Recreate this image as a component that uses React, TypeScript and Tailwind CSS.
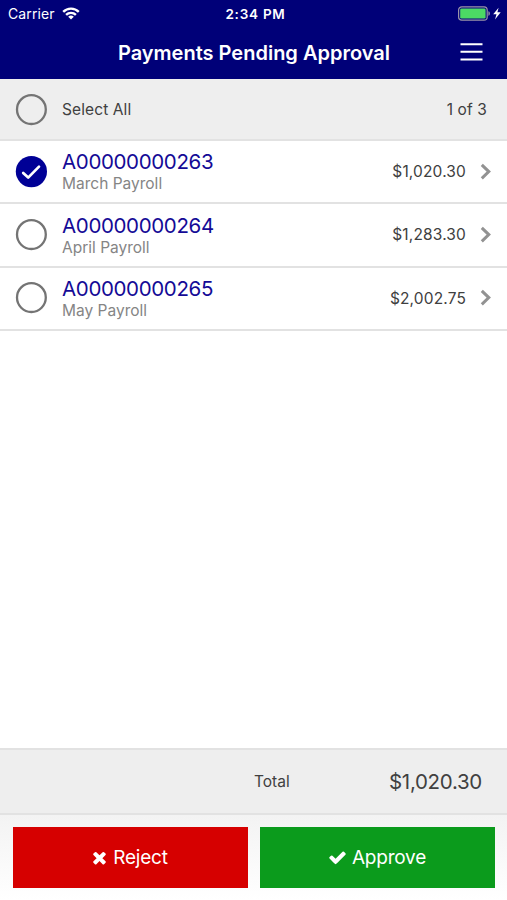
import { useState } from "react";

interface Payment {
  id: string;
  description: string;
  amount: number;
}

const payments: Payment[] = [
  { id: "A00000000263", description: "March Payroll", amount: 1020.3 },
  { id: "A00000000264", description: "April Payroll", amount: 1283.3 },
  { id: "A00000000265", description: "May Payroll", amount: 2002.75 },
];

function fmt(n: number): string {
  return new Intl.NumberFormat("en-US", {
    style: "currency",
    currency: "USD",
  }).format(n);
}

function WifiIcon() {
  return (
    <svg width="18" height="13" viewBox="0 0 18 13" fill="none" stroke="white" strokeWidth="2.4">
      <path d="M1.2 4.8a11.2 11.2 0 0 1 15.6 0" />
      <path d="M4.1 7.9a7 7 0 0 1 9.8 0" />
      <path d="M9 12.6 6.2 9.8a4 4 0 0 1 5.6 0Z" fill="white" stroke="none" />
    </svg>
  );
}

function BatteryIcon() {
  return (
    <svg width="43" height="16" viewBox="0 0 43 16" fill="none">
      <rect x="0.6" y="0.8" width="28.6" height="13.4" rx="3.2" stroke="#9a94a8" strokeWidth="1.2" />
      <rect x="2.2" y="2.4" width="25.4" height="10.2" rx="1.4" fill="#4cd964" />
      <path d="M30.4 5.2c2 .5 2 4.1 0 4.6Z" fill="#9a94a8" />
      <path d="M40.6 1.8 35.2 8.2h3.3L37 13.6l5.7-7.3h-3.3Z" fill="white" />
    </svg>
  );
}

function ChevronIcon() {
  return (
    <svg width="12" height="18" viewBox="0 0 12 18" fill="none" stroke="#929292" strokeWidth="3">
      <path d="M1.8 1.8 8.8 8.6 1.8 15.4" />
    </svg>
  );
}

function TimesIcon() {
  return (
    <svg width="19" height="19" viewBox="0 0 1792 1792" fill="white">
      <path d="M1490 1322q0 40-28 68l-136 136q-28 28-68 28t-68-28l-294-294-294 294q-28 28-68 28t-68-28l-136-136q-28-28-28-68t28-68l294-294-294-294q-28-28-28-68t28-68l136-136q28-28 68-28t68 28l294 294 294-294q28-28 68-28t68 28l136 136q28 28 28 68t-28 68l-294 294 294 294q28 28 28 68z" />
    </svg>
  );
}

function CheckIcon() {
  return (
    <svg width="19" height="19" viewBox="0 0 1792 1792" fill="white">
      <path d="M1671 566q0 40-28 68l-724 724-136 136q-28 28-68 28t-68-28l-136-136-362-362q-28-28-28-68t28-68l136-136q28-28 68-28t68 28l294 295 656-657q28-28 68-28t68 28l136 136q28 28 28 68z" />
    </svg>
  );
}

function SelectCircle({ checked, onClick }: { checked: boolean; onClick: () => void }) {
  return (
    <button onClick={onClick} className="shrink-0 cursor-pointer">
      <svg width="32" height="32" viewBox="0 0 32 32" fill="none" className="block">
        {checked ? (
          <>
            <circle cx="16.4" cy="15.6" r="15.6" fill="#000096" />
            <path d="m8.2 16.9 5 4.7L24 10.6" stroke="white" strokeWidth="2.7" strokeLinecap="round" strokeLinejoin="round" />
          </>
        ) : (
          <circle cx="16.4" cy="15.6" r="14.4" stroke="#747474" strokeWidth="2.3" />
        )}
      </svg>
    </button>
  );
}

export default function App() {
  const [selected, setSelected] = useState<string[]>(["A00000000263"]);

  const allSelected = selected.length === payments.length;
  const total = payments
    .filter((p) => selected.includes(p.id))
    .reduce((sum, p) => sum + p.amount, 0);

  const toggle = (id: string) => {
    setSelected((prev) => (prev.includes(id) ? prev.filter((s) => s !== id) : [...prev, id]));
  };

  const toggleAll = () => {
    setSelected(allSelected ? [] : payments.map((p) => p.id));
  };

  return (
    <div className="flex h-[900px] w-[507px] flex-col overflow-hidden whitespace-nowrap bg-white font-['Inter',sans-serif] text-[#404040]">
      {/* Status bar + title */}
      <header className="h-[79px] shrink-0 bg-[#000078] text-white">
        <div className="grid h-[27px] grid-cols-[1fr_auto_1fr] items-center pl-2 pr-[6px]">
          <div className="flex items-center gap-[7px]">
            <span className="text-[14px] tracking-[0.1px]">Carrier</span>
            <WifiIcon />
          </div>
          <span className="pl-[2px] pt-px text-[13.5px] font-semibold tracking-[0.75px]">2:34 PM</span>
          <div className="flex justify-end">
            <BatteryIcon />
          </div>
        </div>
        <div className="grid h-[51px] grid-cols-[1fr_auto_1fr] items-center px-6">
          <span />
          <h1 className="pl-px text-[20px] font-semibold">Payments Pending Approval</h1>
          <button className="cursor-pointer justify-self-end pb-[2px]">
            <svg width="23" height="18" viewBox="0 0 23 18" stroke="white" strokeWidth="2" className="block">
              <path d="M0.5 1.2h22M0.5 8.8h22M0.5 16.6h22" />
            </svg>
          </button>
        </div>
      </header>

      {/* Select all */}
      <div className="flex h-[62px] shrink-0 items-center border-b-2 border-[#e2e2e2] bg-[#eeeeee] pl-[15px] pr-5 pt-px">
        <SelectCircle checked={allSelected} onClick={toggleAll} />
        <span className="ml-[15px] flex-1 pt-px text-[15.5px] tracking-[0.1px]">Select All</span>
        <span className="pt-px text-[15.5px] tracking-[0.1px]">
          {selected.length} of {payments.length}
        </span>
      </div>

      {/* Payments */}
      <ul className="flex-1">
        {payments.map((p) => (
          <li key={p.id} className="flex h-[63.4px] items-center border-b-2 border-[#e2e2e2] pl-[15px] pr-[15px]">
            <SelectCircle checked={selected.includes(p.id)} onClick={() => toggle(p.id)} />
            <div className="ml-[15px] flex-1">
              <p className="text-[20.5px] leading-[24px] tracking-[-0.35px] text-[#140a96]">{p.id}</p>
              <p className="text-[15.5px] leading-[19px] text-[#858585]">{p.description}</p>
            </div>
            <span className="mr-[14px] text-[15.5px] tracking-[0.15px]">{fmt(p.amount)}</span>
            <ChevronIcon />
          </li>
        ))}
      </ul>

      {/* Total */}
      <div className="flex h-[67px] shrink-0 items-center border-y-2 border-[#e2e2e2] bg-[#eeeeee] pr-[25px] pt-px">
        <span className="ml-[254px] flex-1 text-[15.5px]">Total</span>
        <span className="text-[20.5px] tracking-[-0.3px]">{fmt(total)}</span>
      </div>

      {/* Actions */}
      <div className="flex h-[85px] shrink-0 gap-3 bg-linear-to-b from-[#f3f3f3] to-white pl-[13px] pr-3 pt-3 text-[19px] tracking-[-0.2px] text-white">
        <button className="flex h-[61px] w-[235px] cursor-pointer items-center justify-center gap-1 bg-[#d60000] pr-[3px]">
          <TimesIcon />
          <span className="pt-0.5">Reject</span>
        </button>
        <button className="flex h-[61px] w-[235px] cursor-pointer items-center justify-center gap-[5px] bg-[#0b9b1c] pr-px">
          <CheckIcon />
          <span className="pt-0.5">Approve</span>
        </button>
      </div>
    </div>
  );
}
